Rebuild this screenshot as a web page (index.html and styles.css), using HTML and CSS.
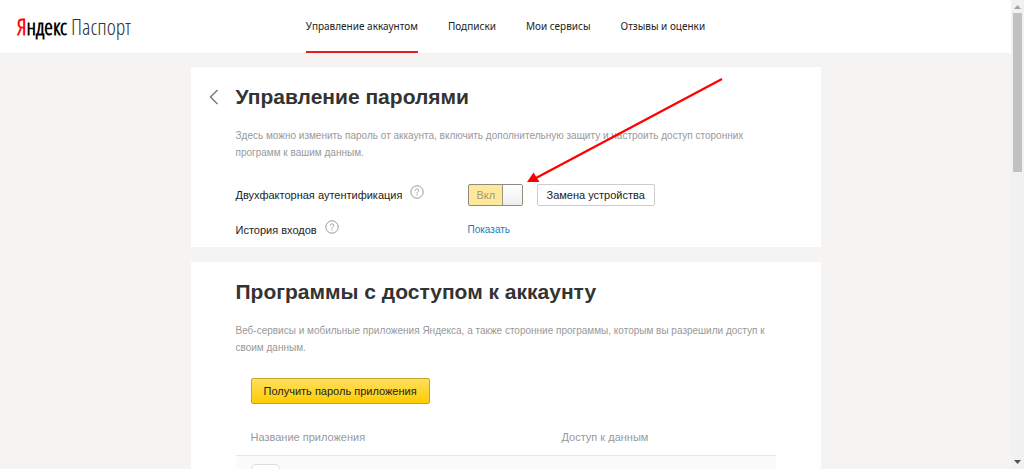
FILE: index.html
```html
<!DOCTYPE html>
<html lang="ru">
<head>
<meta charset="utf-8">
<title>Яндекс Паспорт</title>
<link rel="stylesheet" href="styles.css">
</head>
<body>
<div class="window">
  <div class="page">
    <header class="header">
      <a class="logo" href="#"><span class="logo-brand"><span class="logo-first">Я</span>ндекс</span> Паспорт</a>
      <nav class="nav">
        <a class="nav-link nav-link-active" href="#">Управление аккаунтом</a>
        <a class="nav-link" href="#">Подписки</a>
        <a class="nav-link" href="#">Мои сервисы</a>
        <a class="nav-link" href="#">Отзывы и оценки</a>
      </nav>
    </header>
    <main class="content">
      <section class="card">
        <div class="card-head">
          <a class="back" href="#" aria-label="Назад"><svg width="10" height="16" viewBox="0 0 10 16"><path d="M8.500 1 1.500 8l7 7" fill="none" stroke="#777" stroke-width="1.400"/></svg></a>
          <h1 class="title">Управление паролями</h1>
        </div>
        <p class="note">Здесь можно изменить пароль от аккаунта, включить дополнительную защиту и настроить доступ сторонних программ к вашим данным.</p>
        <div class="settings">
          <div class="row">
            <div class="row-label"><label for="twofactor">Двухфакторная аутентификация</label>
              <button class="help" aria-label="Справка"><svg width="14" height="14" viewBox="0 0 14 14"><circle cx="7" cy="7" r="6.200" fill="none" stroke="#999"/><path d="M5.300 5.600c0-2.300 3.500-2.200 3.400-.2C8.700 6.700 7 6.600 7 8.300M7 9.200v1.200" fill="none" stroke="#999"/></svg></button>
            </div>
            <div class="row-value">
              <span class="toggle"><input class="toggle-input" type="checkbox" id="twofactor" checked><span class="toggle-text">Вкл</span><span class="toggle-knob"></span></span>
              <button class="button">Замена устройства</button>
              <svg class="arrow" width="200" height="108" viewBox="0 0 200 108" aria-hidden="true"><path d="M197 1 11 100" stroke="#f00" stroke-width="2.200"/><path d="M2 104 8.500 94.500 14.500 104Z" fill="#f00"/></svg>
            </div>
          </div>
          <div class="row">
            <div class="row-label"><span>История входов</span>
              <button class="help" aria-label="Справка"><svg width="14" height="14" viewBox="0 0 14 14"><circle cx="7" cy="7" r="6.200" fill="none" stroke="#999"/><path d="M5.300 5.600c0-2.300 3.500-2.200 3.400-.2C8.700 6.700 7 6.600 7 8.300M7 9.200v1.200" fill="none" stroke="#999"/></svg></button>
            </div>
            <div class="row-value"><a class="link" href="#">Показать</a></div>
          </div>
        </div>
      </section>
      <section class="card">
        <div class="card-head"><h2 class="title">Программы с доступом к аккаунту</h2></div>
        <p class="note">Веб-сервисы и мобильные приложения Яндекса, а также сторонние программы, которым вы разрешили доступ к своим данным.</p>
        <button class="button button-primary">Получить пароль приложения</button>
        <table class="apps">
          <thead><tr><th class="apps-name">Название приложения</th><th>Доступ к данным</th></tr></thead>
          <tbody><tr><td><span class="app-icon"></span></td><td></td></tr></tbody>
        </table>
      </section>
    </main>
  </div>
  <div class="scrollbar" aria-hidden="true">
    <svg class="scroll-arrow" width="7" height="4" viewBox="0 0 7 4"><path d="M0 4 3.500 0 7 4Z" fill="#a3a3a3"/></svg>
    <div class="scroll-track"><div class="scroll-thumb"></div></div>
    <svg class="scroll-arrow" width="7" height="4" viewBox="0 0 7 4"><path d="M0 0h7L3.500 4Z" fill="#505050"/></svg>
  </div>
</div>
</body>
</html>
```
FILE: styles.css
```css
* { box-sizing: border-box; }
body {
  margin: 0;
  background: #f5f4f2;
  color: #222;
  font: 11px/16px "Liberation Sans", Arial, sans-serif;
}
a { text-decoration: none; }
button { font: inherit; color: inherit; cursor: pointer; }

.window {
  display: grid;
  grid-template-columns: minmax(0, 1fr) 13px;
  height: 100vh;
  overflow: hidden;
}
.page { overflow: hidden; }

.header {
  display: grid;
  grid-template-columns: minmax(0, 1fr) auto minmax(0, 1fr);
  background: #fff;
}
.logo {
  padding: 11px 0 0 17px;
  color: #333;
  font: 300 22px/30px "Noto Sans ExtraCondensed Light", "Open Sans Condensed Light", "Noto Sans Condensed Light", "Roboto Condensed Light", "Roboto Condensed", sans-serif;
  white-space: nowrap;
}
.logo-brand {
  color: #000;
  font-weight: 600;
}
.logo-first { color: #f00; }
.nav { display: flex; gap: 30px; }
.nav-link {
  padding: 18px 0 17px;
  border-bottom: 2px solid transparent;
  color: #222;
  font: 10px/16px "Noto Sans", "Open Sans", sans-serif;
  white-space: nowrap;
}
.nav-link-active { border-bottom-color: #e61e1e; }

.content {
  display: grid;
  gap: 15px;
  max-width: 630px;
  margin: 14px auto 0;
}
.card { padding: 15px 45px 0; background: #fff; }
.card-head { display: flex; align-items: center; }
.title { margin: 0; color: #333; font-size: 21px; line-height: 30px; }
.back {
  display: flex;
  width: 27px;
  margin-left: -27px;
}
.note {
  margin: 15px 0 0;
  color: #999;
  font-size: 10px;
  line-height: 17px;
}

.settings { margin-top: 16px; }
.row {
  display: grid;
  grid-template-columns: 232px minmax(0, 1fr);
  align-items: center;
  min-height: 35px;
}
.row-label { display: flex; align-items: center; gap: 8px; white-space: nowrap; }
.row-value { position: relative; display: flex; align-items: center; gap: 14px; }
.help {
  display: flex;
  padding: 0 0 6px;
  border: 0;
  background: none;
}
.link { color: #1a7cc0; font-size: 10px; }

.toggle {
  position: relative;
  display: grid;
  grid-template-columns: 33px 20px;
  width: 55px;
  height: 22px;
  border: 1px solid #8f8c7c;
  border-radius: 2px;
  background: #ffe89c;
  color: #a39a78;
  line-height: 20px;
}
.toggle-input {
  position: absolute;
  inset: 0;
  width: 100%;
  height: 100%;
  margin: 0;
  opacity: 0;
  cursor: pointer;
}
.toggle-text { padding-left: 8px; }
.toggle-knob {
  border-left: 1px solid #9d997f;
  background: linear-gradient(#fff, #eee);
}
.button {
  padding: 2px 9px;
  border: 1px solid #ccc;
  border-radius: 2px;
  background: #fff;
  white-space: nowrap;
}
.button-primary {
  margin: 22px 15px 0;
  padding: 4px 12px;
  border-color: #c9a227;
  background: linear-gradient(#ffdf60, #fc0);
}
.arrow {
  position: absolute;
  left: 57px;
  bottom: 20px;
  pointer-events: none;
}

.apps {
  width: 100%;
  margin-top: 17px;
  border-collapse: collapse;
}
.apps th {
  padding: 8px 15px 10px;
  border-bottom: 1px solid #e8e8e8;
  color: #999;
  font-weight: normal;
  text-align: left;
}
.apps-name { width: 311px; }
.apps td { padding: 8px 15px; background: #fbfbfb; }
.app-icon {
  display: block;
  width: 29px;
  height: 29px;
  border: 1px solid #ddd;
  border-radius: 5px;
  background: #fff;
}

.scrollbar {
  display: flex;
  flex-direction: column;
  align-items: center;
  padding: 5px 0;
  background: #f1f1f1;
}
.scroll-arrow { flex: none; }
.scroll-track { flex: 1; width: 100%; padding: 4px 2px; }
.scroll-thumb { height: 36%; background: #c1c1c1; }
```
